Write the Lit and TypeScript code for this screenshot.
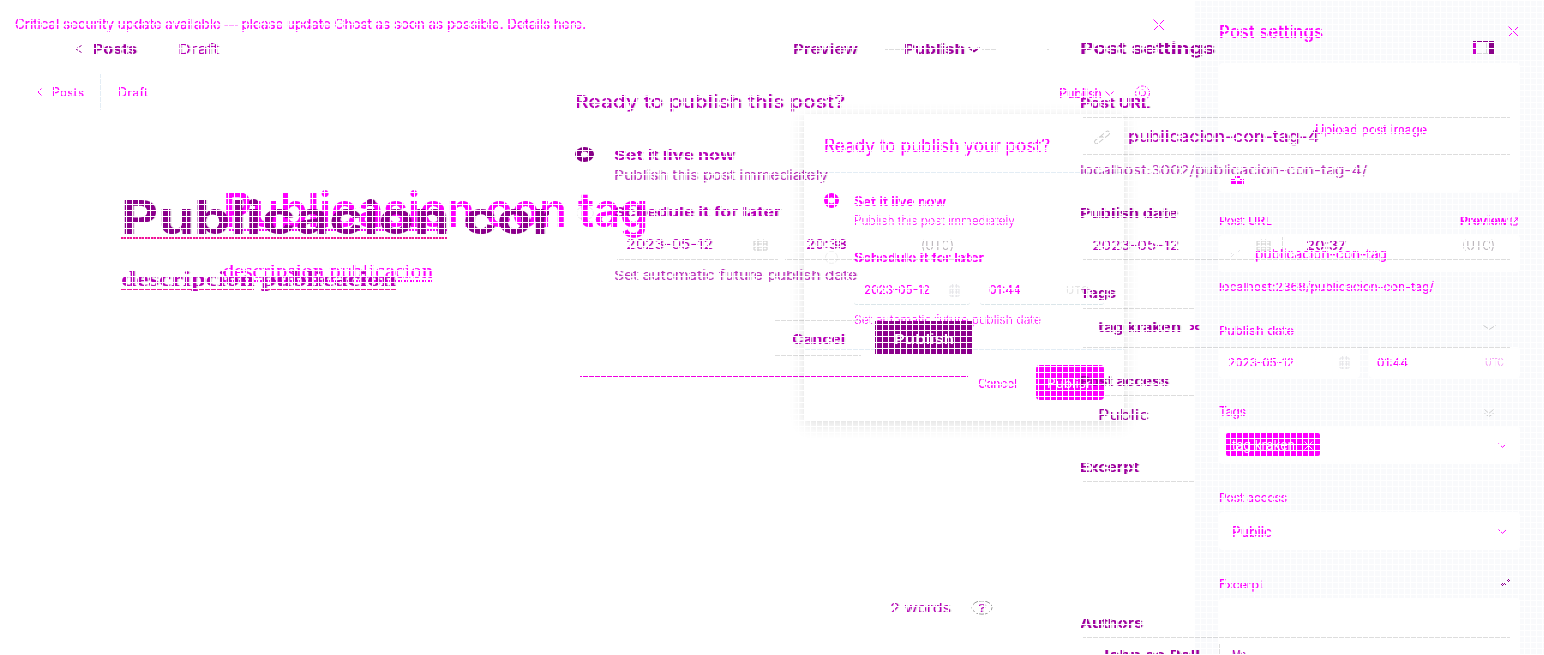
import { LitElement, html, svg, css, TemplateResult } from "lit";
import { customElement, property } from "lit/decorators.js";

/** A single line of text stretched or squeezed to a given width. */
@customElement("fit-text")
class FitText extends LitElement {
  @property({ type: Number }) w = 0;
  static styles = css`
    :host { display: block; line-height: 1.2; white-space: pre; }
    span { display: inline-block; transform-origin: 0 50%; }
  `;
  render() {
    return html`<span><slot></slot></span>`;
  }
  firstUpdated() {
    const span = this.renderRoot.querySelector("span") as HTMLElement;
    const natural = span.getBoundingClientRect().width;
    if (natural > 0) span.style.transform = `scaleX(${this.w / natural})`;
  }
}

interface Item { x: number; w: number; view: TemplateResult; clip?: boolean; }
interface Row { c: number; items: Item[]; }

const t = (x: number, end: number, size: number, cls: string, text: string): Item => ({
  x, w: end - x,
  view: html`<fit-text class=${cls} w=${end - x} style="font-size:${size}px">${text}</fit-text>`,
});
const box = (x: number, w: number, h: number, cls: string, inner: unknown = ""): Item => ({
  x, w, view: html`<div class="box ${cls}" style="width:${w}px;height:${h}px">${inner}</div>`,
});
const icon = (x: number, w: number, h: number, cls: string, shape: unknown): Item => ({
  x, w, view: html`<svg class=${cls} width=${w} height=${h} viewBox="0 0 ${w} ${h}">${shape}</svg>`,
});
const cross = (x: number, s: number, cls: string) =>
  icon(x, s, s, cls, svg`<path d="M.5 .5L${s - 0.5} ${s - 0.5}M${s - 0.5} .5L.5 ${s - 0.5}"/>`);
const down = (x: number, w: number, h: number, cls: string) =>
  icon(x, w, h, cls, svg`<path d="M.5 .5L${w / 2} ${h - 0.7}L${w - 0.5} .5"/>`);
const left = (x: number, w: number, h: number, cls: string) =>
  icon(x, w, h, cls, svg`<path d="M${w - 0.5} .5L1 ${h / 2}L${w - 0.5} ${h - 0.5}"/>`);
const radio = (x: number, w: number, h: number, cls: string) =>
  icon(x, w, h, cls, svg`<ellipse cx=${w / 2} cy=${h / 2} rx=${w / 2} ry=${h / 2}/><ellipse class="hole" cx=${w / 2} cy=${h / 2} rx=${w / 5.4} ry=${h / 5}/>`);
const calendar = (x: number, w: number, h: number, cls: string) =>
  icon(x, w, h, cls, svg`<path d="M1 2H${w - 1}V${h - 1}H1ZM1 5H${w - 1}M1 8H${w - 1}M${w / 3} 0V${h}M${(w * 2) / 3} 0V${h}"/>`);
const chain = (x: number, w: number, h: number) =>
  icon(x, w, h, "s-grey", svg`<g transform="rotate(-38 ${w / 2} ${h / 2})"><rect x="-1" y=${h / 2 - 2} width=${w / 2 + 2} height="4" rx="2"/><rect x=${w / 2 - 1} y=${h / 2 - 2} width=${w / 2 + 2} height="4" rx="2"/></g>`);

/** Rows are given by their centre line; spacing between rows becomes margins. */
const stack = (rows: Row[]) => {
  let y = 0;
  return html`<div class="stack">${rows.map((r) => {
    const mt = r.c - y;
    y = r.c;
    let x = 0;
    return html`<div class="row" style="margin-top:${mt}px">${r.items.map((i) => {
      const ml = i.x - x;
      x = i.x + i.w;
      return html`<div class="cell ${i.clip ? "clip" : ""}" style="margin-left:${ml}px;width:${i.w}px">${i.view}</div>`;
    })}</div>`;
  })}</div>`;
};

const lightEditor: Row[] = [
  { c: 24.5, items: [t(15, 586, 14, "m", "Critical security update available — please update Ghost as soon as possible. Details here."), cross(1153, 12, "s-m")] },
  { c: 92, items: [left(37, 5, 8, "s-m"), t(52, 84, 12.5, "m", "Posts"), box(100, 1, 36, "rule-blue"), t(118, 148, 12.5, "m", "Draft")] },
  { c: 93, items: [t(1059, 1102, 12.5, "m", "Publish"), down(1105, 9, 5, "s-m"),
    icon(1134, 17, 17, "s-m", svg`<circle cx="8.5" cy="8" r="7" stroke-dasharray="3 1.4"/><circle cx="8.5" cy="8" r="3"/>`)] },
  { c: 210, items: [t(223, 648, 48, "m semi", "Publicasion con tag")] },
  { c: 230, items: [box(229, 218, 2, "wave-m")] },
  { c: 272, items: [t(223, 433, 21, "m serif", "descripsion publicacion")] },
  { c: 281, items: [box(224, 209, 2, "wave-m")] },
];

const lightDialog: Row[] = [
  { c: 267.5, items: [box(804, 320, 307, "dialog")] },
];

const lightDialogBody: Row[] = [
  { c: 146, items: [t(824, 1050, 18, "m", "Ready to publish your post?")] },
  { c: 172.5, items: [box(804, 320, 1, "rule-blue")] },
  { c: 200.5, items: [radio(824, 15, 15, "f-m")] },
  { c: 202, items: [t(854, 946, 12.8, "m semi", "Set it live now")] },
  { c: 220.5, items: [t(854, 1015, 12.5, "m thin", "Publish this post immediately")] },
  { c: 257.7, items: [box(825, 13, 13, "ring"), t(854, 984, 12.8, "m semi", "Schedule it for later")] },
  { c: 289, items: [box(854, 116, 32, "field-line"), box(980, 124, 32, "field-line")] },
  { c: 290.5, items: [t(864, 930, 12, "m", "2023-05-12"), calendar(949, 11, 13, "s-faint"), t(989, 1021, 12, "m", "01:44"), t(1066, 1089, 11, "faint", "UTC")] },
  { c: 320.5, items: [t(854, 1041, 12, "m thin", "Set automatic future publish date")] },
  { c: 349.5, items: [box(804, 320, 1, "rule-blue")] },
  { c: 382.5, items: [box(1036, 68, 35, "btn-m")] },
  { c: 383.7, items: [t(978, 1017, 12.8, "m", "Cancel"), t(1047, 1094, 12.8, "white", "Publish")] },
];

const lightSidebar: Row[] = [
  { c: 327.5, items: [box(1195, 349, 655, "side")] },
  { c: 31.5, items: [t(1219, 1323, 17.5, "m med", "Post settings"), cross(1508, 11, "s-m")] },
  { c: 127.5, items: [box(1219, 301, 129, "card")] },
  { c: 129.5, items: [t(1315, 1427, 12.5, "m", "Upload post image")] },
  { c: 180, items: [icon(1231, 13, 8, "f-m", svg`<path d="M0 3H4V5H9V3H13V8H0ZM4 0H9V2H4Z"/>`)] },
  { c: 221.5, items: [t(1219, 1272, 12.3, "m", "Post URL"), t(1460, 1508, 12.3, "m semi", "Preview"), icon(1510, 9, 9, "s-m", svg`<path d="M3 1H1V8H7V6M4 5L8 1M5 1H8V4"/>`)] },
  { c: 253, items: [box(1219, 301, 37, "card")] },
  { c: 254, items: [icon(1229, 12, 10, "s-faint", svg`<path d="M1 9L5 5M7 5L11 1M1 6L4 3"/>`), t(1255, 1387, 13.5, "m", "publicacion-con-tag")] },
  { c: 287.5, items: [t(1219, 1434, 12.3, "m", "localhost:2368/publicacion-con-tag/")] },
  { c: 331.5, items: [t(1219, 1294, 12.3, "m", "Publish date")] },
  { c: 362.5, items: [box(1219, 141, 31, "card"), box(1369, 151, 31, "card")] },
  { c: 362.7, items: [t(1228, 1294, 12, "m", "2023-05-12"), calendar(1339, 11, 13, "s-faint"), t(1377, 1408, 12, "m", "01:44"), t(1485, 1504, 11, "pale", "UTC")] },
  { c: 411.5, items: [t(1219, 1246, 12.5, "m", "Tags"), down(1484, 10, 5, "s-grey")] },
  { c: 445, items: [box(1219, 301, 38, "card"), box(1226, 94, 23, "tag")] },
  { c: 446, items: [t(1232, 1295, 13, "white", "tag kraken"), cross(1304, 9, "s-white"), down(1498, 9, 5, "s-m")] },
  { c: 498.7, items: [t(1219, 1287, 12.3, "m", "Post access")] },
  { c: 531, items: [box(1219, 301, 38, "card")] },
  { c: 532, items: [t(1232, 1272, 14.5, "m", "Public"), down(1498, 9, 5, "s-m")] },
  { c: 584.5, items: [t(1219, 1263, 12.5, "m", "Excerpt")] },
  { c: 638, items: [box(1219, 301, 80, "card")] },
];

const darkEditor: Row[] = [
  { c: 49.3, items: [left(75, 7, 8, "s-p"), t(93, 137, 13, "p bold", "Posts"), t(178, 219, 13, "q", "Draft"), t(793, 858, 13, "p semi", "Preview"),
    box(885, 19, 1, "rule"), t(904, 965, 13, "p bold", "Publish"), down(968, 12, 5, "s-p thick"), box(982, 15, 1, "rule"), box(1047, 2, 1, "rule")] },
  { c: 217.5, items: [{ x: 121, w: 428, clip: true, view: html`<fit-text class="p bold title" w="447">Publicacion con</fit-text>` }] },
  { c: 238, items: [box(121, 326, 2, "wave-p")] },
  { c: 279.5, items: [t(121, 396, 20, "q serif heavy", "descripcion publicacion")] },
  { c: 289.5, items: [box(121, 133, 1, "rule-pink"), box(261, 135, 1, "rule-pink")] },
  { c: 608, items: [icon(971, 22, 15, "s-dim", svg`<ellipse cx="11" cy="7.5" rx="10" ry="6.7"/>`)] },
  { c: 609, items: [t(890, 951, 13, "q", "2 words"), t(978, 986, 11, "q", "?")] },
];

const darkDialog: Row[] = [
  { c: 101, items: [t(575, 845, 17.5, "q med", "Ready to publish this post?")] },
  { c: 154.5, items: [radio(575, 19, 15, "f-p")] },
  { c: 156, items: [t(614, 735, 13, "q bold", "Set it live now")] },
  { c: 176, items: [t(614, 828, 13, "q mix", "Publish this post immediately")] },
  { c: 212.7, items: [box(576, 18, 14, "ring"), t(614, 781, 13, "q bold", "Schedule it for later")] },
  { c: 245.3, items: [t(626, 713, 13, "q", "2023-05-12"), calendar(753, 15, 12, "s-grey"), t(806, 847, 13, "q med", "20:38"), t(921, 954, 12.5, "dim", "(UTC)")] },
  { c: 259.5, items: [box(617, 161, 1, "rule"), box(785, 182, 1, "rule")] },
  { c: 276, items: [t(614, 857, 13, "q mix", "Set automatic future publish date")] },
  { c: 320.5, items: [box(775, 86, 1, "rule")] },
  { c: 337.5, items: [box(875, 97, 33, "btn-p")] },
  { c: 340, items: [t(792, 845, 13, "q bold", "Cancel"), t(894, 954, 13, "white semi", "Publish")] },
  { c: 355.5, items: [box(775, 86, 1, "rule")] },
  { c: 376.5, items: [box(580, 388, 1, "rule-m")] },
];

const darkSettings: Row[] = [
  { c: 47.5, items: [icon(1473, 21, 13, "", svg`<path class="hot" d="M0 0H3V13H0Z"/><path class="deep" d="M0 0H21V1H0ZM15 1H21V13H15Z"/><path class="pale-edge" d="M3 12H15V13H3ZM13 1H14V12H13Z"/>`)] },
  { c: 49, items: [t(1080, 1215, 16, "p bold", "Post settings")] },
  { c: 104, items: [t(1080, 1150, 13, "q bold", "Post URL")] },
  { c: 117.5, items: [box(1083, 427, 1, "rule")] },
  { c: 137.5, items: [chain(1094, 16, 13), t(1128, 1319, 15.5, "q med", "publicacion-con-tag-4")] },
  { c: 154.5, items: [box(1083, 427, 1, "rule")] },
  { c: 170, items: [t(1080, 1367, 13.5, "q mix", "localhost:3002/publicacion-con-tag-4/")] },
  { c: 214, items: [t(1080, 1178, 13, "p bold", "Publish date")] },
  { c: 245.3, items: [t(1092, 1179, 13, "q", "2023-05-12"), calendar(1256, 15, 12, "s-grey"), box(1282, 1, 16, "rule"), t(1306, 1346, 13, "q med", "20:37"), t(1462, 1495, 12.5, "dim", "(UTC)")] },
  { c: 259.5, items: [box(1083, 427, 1, "rule")] },
  { c: 294, items: [t(1080, 1116, 13, "p bold", "Tags")] },
  { c: 308.5, items: [box(1083, 111, 1, "rule")] },
  { c: 328, items: [t(1098, 1181, 13, "p bold", "tag kraken"), t(1188, 1201, 13, "q bold", "×"), down(1483, 13, 5, "s-grey")] },
  { c: 347.5, items: [box(1083, 427, 1, "rule")] },
  { c: 382, items: [t(1080, 1169, 13, "p bold", "Post access")] },
  { c: 395.5, items: [box(1105, 89, 1, "rule")] },
  { c: 415, items: [t(1098, 1149, 14.5, "p", "Public"), down(1484, 10, 4, "s-grey")] },
  { c: 468, items: [t(1080, 1139, 13, "p bold", "Excerpt")] },
  { c: 481.5, items: [box(1083, 111, 1, "rule")] },
  { c: 583, items: [icon(1499, 12, 9, "s-p", svg`<path d="M1 8L5 4M3 8L7 4M6 7L11 2M8 3L10 1"/>`)] },
  { c: 624, items: [t(1080, 1143, 13, "p bold", "Authors")] },
  { c: 637.5, items: [box(1083, 427, 1, "rule")] },
  { c: 649, items: [box(1219, 1, 10, "rule")] },
  { c: 656, items: [t(1099, 1200, 13, "p bold", "John ae Roll"), t(1232, 1246, 13, "q", "Me")] },
];

@customElement("app-root")
class AppRoot extends LitElement {
  static styles = css`
    :host { display: block; height: 655px; overflow: hidden; background: #fff; font-family: Inter, "Liberation Sans", sans-serif; }
    .page { display: grid; width: 1544px; height: 655px; overflow: hidden; isolation: isolate; }
    .layer { grid-area: 1 / 1; display: grid; width: 1544px; height: 655px; overflow: hidden; }
    .over { mix-blend-mode: multiply; }
    .mesh {
      grid-area: 1 / 1; pointer-events: none; z-index: 2;
      background-image: linear-gradient(90deg, #fff 1px, transparent 1px), linear-gradient(#fff 1px, transparent 1px);
      background-size: 6px 6px;
    }
    .stack { grid-area: 1 / 1; display: flow-root; }
    .row { display: flex; align-items: center; height: 0; }
    .cell { flex: none; }
    .clip { overflow: hidden; }
    svg { display: block; overflow: visible; fill: none; stroke-width: 1; }
    .box { box-sizing: border-box; }
    .m { color: #f0f; -webkit-text-stroke: .2px #f0f; }
    .p { color: #a000a0; text-shadow: 1px 0 rgba(170, 170, 170, .35); }
    .q { color: #b800b8; text-shadow: 1px 0 rgba(170, 170, 170, .35); }
    .mix { color: #bd30bd; }
    .dim { color: #b9b4b9; }
    .faint { color: #e4e4e4; }
    .pale { color: #f3a6f3; }
    .white { color: #fff; }
    .thin { font-weight: 300; -webkit-text-stroke: 0; }
    .med { font-weight: 500; }
    .semi { font-weight: 600; }
    .bold { font-weight: 700; }
    .heavy { font-weight: 700; }
    .title { font-size: 46px; color: #8b008b; }
    .serif { font-family: "Liberation Serif", serif; }
    .s-m { stroke: #f0f; }
    .s-p { stroke: #920092; }
    .thick { stroke-width: 2; }
    .s-grey { stroke: #ccc; }
    .s-dim { stroke: #999; }
    .s-faint { stroke: #e4e4e8; }
    .s-white { stroke: #fff; }
    .f-m { fill: #f0f; }
    .f-p { fill: #870087; }
    .hole { fill: #fff; }
    .hot { fill: #cc00cc; }
    .deep { fill: #8b008b; }
    .pale-edge { fill: #ddd; }
    .rule { background: #ddd; }
    .rule-blue { background: #e3edf5; }
    .rule-pink { background: #f0189f; }
    .rule-m { background: #ee00e0; }
    .wave-m { background: repeating-linear-gradient(90deg, #f0f 0 2px, #fff 2px 3px); }
    .wave-p { background: repeating-linear-gradient(90deg, #ee1199 0 2px, #f7b 2px 3px); }
    .ring { border: 1px solid #eee; border-radius: 50%; }
    .field-line { border-bottom: 1px solid #dbe6ea; border-radius: 3px; }
    .dialog { background: #fff; border-radius: 3px; box-shadow: 0 0 1px rgba(0, 0, 0, .12), 0 4px 16px rgba(0, 0, 0, .12); }
    .btn-m { background: #f0f; border-radius: 4px; }
    .btn-p { background: #8b008b; }
    .side { background: #f9fafc; }
    .card { background: #fff; border-radius: 4px; }
    .tag { background: #f0f; border-radius: 2px; }
  `;
  render() {
    return html`
      <main class="page">
        <section class="layer">${stack(lightEditor)}${stack(lightDialog)}${stack(lightDialogBody)}${stack(lightSidebar)}</section>
        <section class="layer over">${stack(darkEditor)}${stack(darkDialog)}${stack(darkSettings)}</section>
        <div class="mesh"></div>
      </main>`;
  }
}
